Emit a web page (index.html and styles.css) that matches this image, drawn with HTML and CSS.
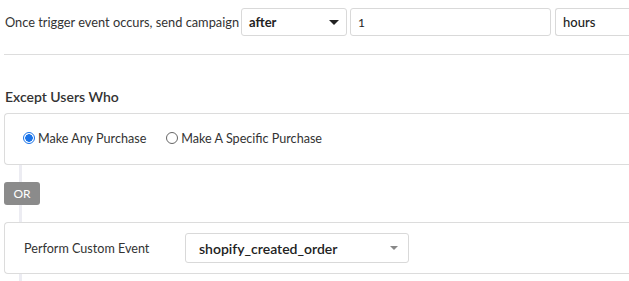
FILE: index.html
```html
<!DOCTYPE html>
<html lang="en">
<head>
    <meta charset="UTF-8">
    <meta name="viewport" content="width=device-width, initial-scale=1.0">
    <title>Campaign Trigger</title>
    <link rel="stylesheet" href="styles.css">
</head>
<body>
    <div class="trigger-row">
        <span class="trigger-label">Once trigger event occurs, send campaign</span>
        <div class="select select-when">
            <span>after</span>
            <span class="caret"></span>
        </div>
        <div class="field field-amount">1</div>
        <div class="field field-unit">hours</div>
    </div>

    <h3 class="section-title">Except Users Who</h3>

    <div class="rules">
        <div class="rule-box radio-box">
            <label class="radio checked"><span class="dot"></span>Make Any Purchase</label>
            <label class="radio"><span class="dot"></span>Make A Specific Purchase</label>
        </div>
        <div class="connector"></div>
        <div class="or-badge">OR</div>
        <div class="connector"></div>
        <div class="rule-box event-box">
            <span class="event-label">Perform Custom Event</span>
            <div class="select select-event">
                <span>shopify_created_order</span>
                <span class="caret small"></span>
            </div>
        </div>
        <div class="connector"></div>
    </div>
</body>
</html>
```

FILE: styles.css
```css
body {
    margin: 0;
    font-family: 'Lato', 'Open Sans', sans-serif;
    color: #333;
    background: #fff;
    overflow: hidden;
}

.trigger-row {
    display: flex;
    align-items: center;
    padding: 8px 0 18px 1px;
    border-bottom: 1px solid #ddd;
    margin-left: 4px;
    white-space: nowrap;
}
.trigger-label {
    font-size: 12.8px;
    margin-right: 2px;
}
.select, .field {
    box-sizing: border-box;
    height: 28px;
    border: 1px solid #d9d9d9;
    border-radius: 3px;
    display: flex;
    align-items: center;
    padding: 0 7px;
    font-size: 13px;
    color: #222;
    flex-shrink: 0;
}
.select {
    justify-content: space-between;
}
.select-when {
    width: 106px;
    font-weight: 700;
    margin-right: 3px;
}
.field-amount {
    width: 201px;
    margin-right: 4px;
    font-size: 12px;
}
.field-unit {
    flex: 1;
    font-weight: 500;
    border-right: none;
    border-radius: 3px 0 0 3px;
}
.caret {
    width: 0;
    height: 0;
    border-left: 5px solid transparent;
    border-right: 5px solid transparent;
    border-top: 5px solid #222;
}
.caret.small {
    border-left-width: 4px;
    border-right-width: 4px;
    border-top: 4px solid #888;
}

.section-title {
    margin: 33px 0 0 5px;
    font-size: 14px;
    font-weight: 600;
    color: #333;
}

.rules {
    margin: 8px 0 0 4px;
}
.rule-box {
    box-sizing: border-box;
    height: 52px;
    border: 1px solid #dcdcdc;
    border-right: none;
    border-radius: 4px 0 0 4px;
    display: flex;
    align-items: center;
    font-size: 12.6px;
}
.radio-box {
    padding-left: 18px;
    padding-bottom: 2px;
    gap: 20px;
}
.radio {
    display: flex;
    align-items: center;
    color: #333;
}
.dot {
    box-sizing: border-box;
    width: 12px;
    height: 12px;
    border-radius: 50%;
    border: 1px solid #666;
    margin-right: 3px;
    background: #fff;
}
.radio.checked .dot {
    border: 1px solid #1a73e8;
    background: radial-gradient(circle, #1a73e8 0 3.5px, #fff 4px);
}
.connector {
    width: 3px;
    height: 17px;
    margin-left: 15px;
    background: #ececf2;
}
.or-badge {
    width: 36px;
    height: 23px;
    border-radius: 3px;
    background: #8b8b8b;
    color: #fff;
    font-size: 12px;
    display: flex;
    align-items: center;
    justify-content: center;
}
.event-box {
    padding-left: 19px;
}
.event-label {
    width: 161px;
    color: #333;
}
.select-event {
    width: 224px;
    height: 30px;
    font-size: 14px;
    font-weight: 600;
    padding: 0 10px 0 13px;
}
```
